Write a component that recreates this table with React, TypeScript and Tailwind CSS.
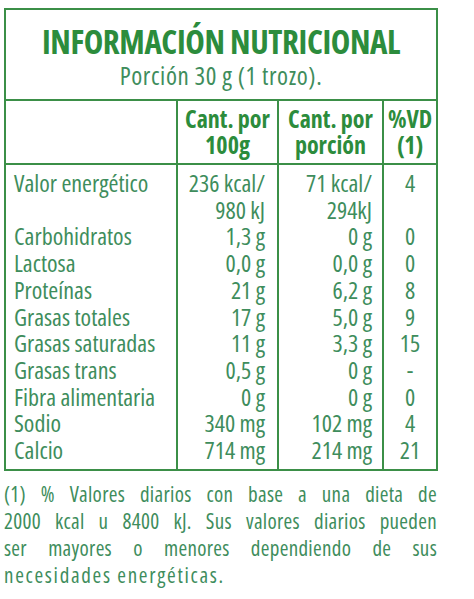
const rows: [string, string, string, string][] = [
  ['Carbohidratos', '1,3 g', '0 g', '0'],
  ['Lactosa', '0,0 g', '0,0 g', '0'],
  ['Proteínas', '21 g', '6,2 g', '8'],
  ['Grasas totales', '17 g', '5,0 g', '9'],
  ['Grasas saturadas', '11 g', '3,3 g', '15'],
  ['Grasas trans', '0,5 g', '0 g', '-'],
  ['Fibra alimentaria', '0 g', '0 g', '0'],
  ['Sodio', '340 mg', '102 mg', '4'],
  ['Calcio', '714 mg', '214 mg', '21'],
];

const note = [
  '(1) % Valores diarios con base a una dieta de',
  '2000 kcal u 8400 kJ. Sus valores diarios pueden',
  'ser mayores o menores dependiendo de sus',
];

export default function App() {
  return (
    <div className="w-[474px] h-[599px] bg-white pt-2 pl-1 font-['Open_Sans',sans-serif] font-stretch-condensed">
      <div className="w-[434px] border-2 border-[#3b8f47]">
        {/* Title */}
        <div className="h-[91px] flex flex-col items-center justify-center border-b-2 border-[#3b8f47] pt-1">
          <h1 className="text-[33px] leading-[36px] font-bold text-[#2c8c3c] tracking-[-0.4px]">
            INFORMACIÓN NUTRICIONAL
          </h1>
          <p className="text-[25px] leading-[30px] text-[#3e8d5c] tracking-[0.6px]">Porción 30 g (1 trozo).</p>
        </div>

        {/* Header */}
        <div className="grid grid-cols-[170px_101px_105px_1fr] h-[64px] border-b-2 border-[#3b8f47] text-[#2c8c3c] font-bold text-[24px] leading-[26px]">
          <div />
          <div className="border-l-2 border-[#3b8f47] flex flex-col items-center justify-center">
            <span>Cant. por</span>
            <span>100g</span>
          </div>
          <div className="border-l-2 border-[#3b8f47] flex flex-col items-center justify-center">
            <span>Cant. por</span>
            <span>porción</span>
          </div>
          <div className="border-l-2 border-[#3b8f47] flex flex-col items-center justify-center">
            <span>%VD</span>
            <span>(1)</span>
          </div>
        </div>

        {/* Body */}
        <div className="grid grid-cols-[170px_101px_105px_1fr] text-[24px] leading-[26.7px] text-[#3e8d5c]">
          <div className="pl-2 py-[5px]">
            <div>Valor energético</div>
            <div>&nbsp;</div>
            {rows.map((r) => (
              <div key={r[0]}>{r[0]}</div>
            ))}
          </div>
          <div className="border-l-2 border-[#3b8f47] text-right pr-3 py-[5px]">
            <div>236 kcal/</div>
            <div>980 kJ</div>
            {rows.map((r) => (
              <div key={r[0]}>{r[1]}</div>
            ))}
          </div>
          <div className="border-l-2 border-[#3b8f47] text-right pr-[10px] py-[5px]">
            <div>71 kcal/</div>
            <div>294kJ</div>
            {rows.map((r) => (
              <div key={r[0]}>{r[2]}</div>
            ))}
          </div>
          <div className="border-l-2 border-[#3b8f47] text-center py-[5px]">
            <div>4</div>
            <div>&nbsp;</div>
            {rows.map((r) => (
              <div key={r[0]}>{r[3]}</div>
            ))}
          </div>
        </div>
      </div>

      {/* Footnote */}
      <div className="w-[433px] mt-[10px] text-[21px] leading-[27px] text-[#3e8d5c] font-stretch-semi-condensed tracking-[0.3px]">
        {note.map((l) => (
          <p key={l} className="whitespace-nowrap text-justify [text-align-last:justify]">
            {l}
          </p>
        ))}
        <p className="tracking-[1.7px]">necesidades energéticas.</p>
      </div>
    </div>
  );
}
